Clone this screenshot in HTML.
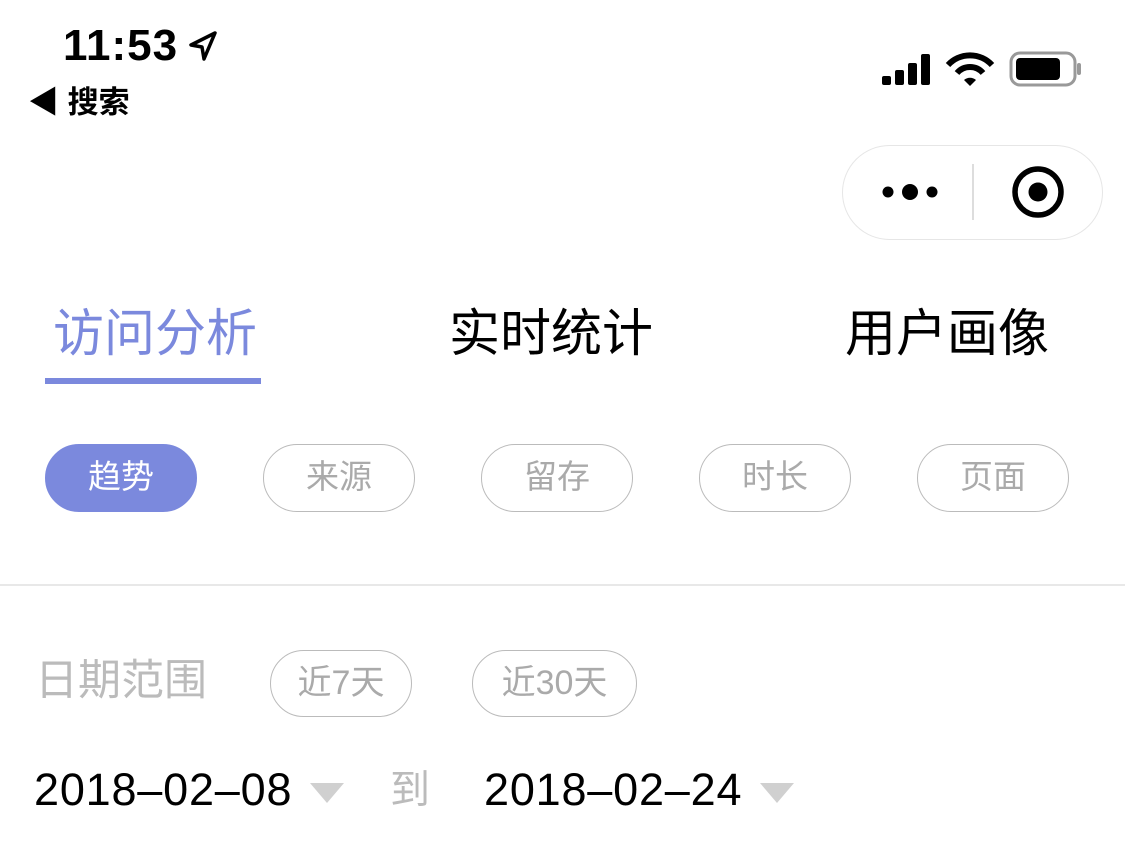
<!DOCTYPE html>
<html><head><meta charset="utf-8"><style>
*{margin:0;padding:0;box-sizing:border-box}
body{width:1125px;height:844px;background:#fff;font-family:"Liberation Sans","Noto Sans CJK SC",sans-serif;position:relative;overflow:hidden}
.a{position:absolute}
.tab{position:absolute;top:302px;font-size:51px;line-height:64px;color:#000}
.pill{position:absolute;top:444px;width:152px;height:68px;border:1.5px solid #bbb;border-radius:34px;color:#aaa;font-size:33px;text-align:center;line-height:64px}
.pill2{position:absolute;top:650px;height:67px;border:1.5px solid #bbb;border-radius:34px;color:#aaa;font-size:34px;text-align:center;line-height:64px}
.tri{position:absolute;top:783px;width:0;height:0;border-left:17px solid transparent;border-right:17px solid transparent;border-top:20px solid #d0d0d0}
</style></head><body>
<div class="a" style="left:63px;top:21px;font-size:44px;font-weight:bold;line-height:50px;letter-spacing:1px">11:53</div>
<svg class="a" style="left:188px;top:30px" width="30" height="32" viewBox="0 0 30 32"><path d="M27 3 L3 15 L14 17 L16 29 Z" fill="none" stroke="#000" stroke-width="3.5" stroke-linejoin="round"/></svg>
<div class="a" style="left:28px;top:84px;font-size:31px;font-weight:bold;line-height:38px">◀ 搜索</div>
<svg class="a" style="left:880px;top:50px" width="205" height="38" viewBox="0 0 205 38">
<rect x="2" y="26" width="9" height="9" rx="2"/><rect x="15" y="20" width="9" height="15" rx="2"/><rect x="28" y="13" width="9" height="22" rx="2"/><rect x="41" y="4" width="9" height="31" rx="2"/>
<path d="M68 15 A30 30 0 0 1 112 15" fill="none" stroke="#000" stroke-width="6"/><path d="M77 23 A17 17 0 0 1 103 23" fill="none" stroke="#000" stroke-width="6"/><path d="M84 30 L90 36 L96 30 A9 9 0 0 0 84 30Z"/>
<rect x="131" y="3" width="64" height="32" rx="9" fill="none" stroke="#999" stroke-width="3"/><rect x="136" y="8" width="44" height="22" rx="4"/><rect x="197" y="13" width="4" height="12" rx="2" fill="#999"/></svg>
<div class="a" style="left:842px;top:145px;width:261px;height:95px;border:1.5px solid #e6e6e6;border-radius:48px"></div>
<div class="a" style="left:972px;top:164px;width:1.5px;height:56px;background:#ddd"></div>
<svg class="a" style="left:880px;top:180px" width="62" height="24"><circle cx="8" cy="12" r="5.5"/><circle cx="30" cy="12" r="8"/><circle cx="52" cy="12" r="5.5"/></svg>
<svg class="a" style="left:1010px;top:164px" width="56" height="56"><circle cx="28" cy="28" r="23" fill="none" stroke="#000" stroke-width="5.5"/><circle cx="28" cy="28" r="9.5"/></svg>
<div class="tab" style="left:53px;color:#7b89dd">访问分析</div>
<div class="a" style="left:45px;top:378px;width:216px;height:6px;background:#7b89dd"></div>
<div class="tab" style="left:449px">实时统计</div>
<div class="tab" style="left:845px">用户画像</div>
<div class="pill" style="left:45px;background:#7b89dd;border-color:#7b89dd;color:#fff">趋势</div>
<div class="pill" style="left:263px">来源</div>
<div class="pill" style="left:481px">留存</div>
<div class="pill" style="left:699px">时长</div>
<div class="pill" style="left:917px">页面</div>
<div class="a" style="left:0;top:584px;width:1125px;height:1.5px;background:#e8e8e8"></div>
<div class="a" style="left:35px;top:653px;font-size:43px;color:#bbb;line-height:56px">日期范围</div>
<div class="pill2" style="left:270px;width:142px">近7天</div>
<div class="pill2" style="left:472px;width:165px">近30天</div>
<div class="a" style="left:34px;top:764px;font-size:45px;line-height:52px;letter-spacing:0.8px">2018–02–08</div>
<div class="tri" style="left:310px"></div>
<div class="a" style="left:390px;top:764px;font-size:40px;line-height:52px;color:#bbb">到</div>
<div class="a" style="left:484px;top:764px;font-size:45px;line-height:52px;letter-spacing:0.8px">2018–02–24</div>
<div class="tri" style="left:760px"></div>
</body></html>
